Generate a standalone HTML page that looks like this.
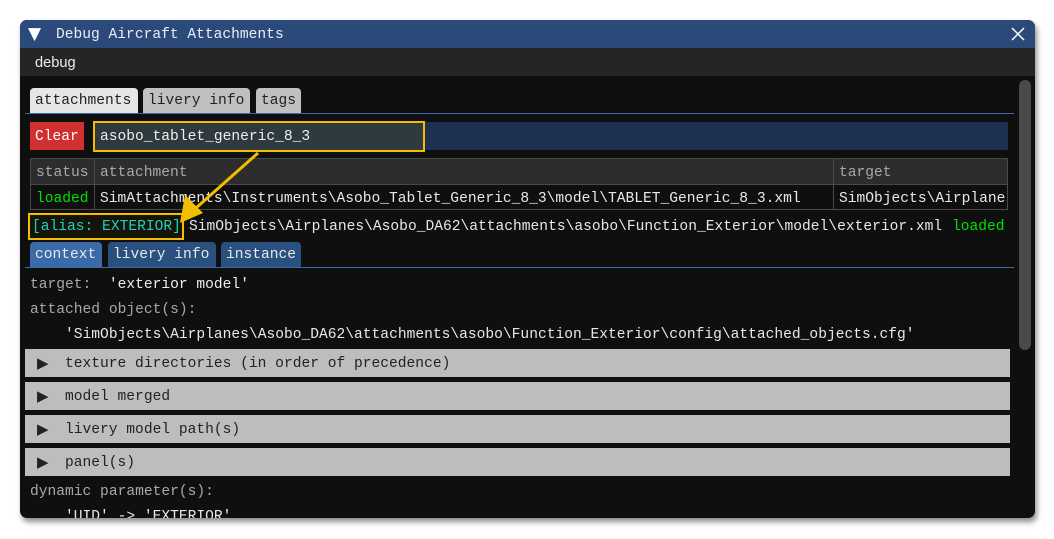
<!DOCTYPE html>
<html><head><meta charset="utf-8"><style>
*{margin:0;padding:0;box-sizing:border-box}
body{width:1054px;height:539px;background:#fff;position:relative;overflow:hidden;font-family:"Liberation Mono",monospace;font-size:14.6px;color:#e8e8e8}
.a{position:absolute;white-space:pre;line-height:28px}
#win{position:absolute;left:20px;top:20px;width:1015px;height:498px;background:#0f0f0f;border-radius:7px;overflow:hidden;box-shadow:2px 4px 6px rgba(0,0,0,.45)}
.hd{position:absolute;left:25px;width:985px;height:28px;background:#bdbdbd;color:#222}
.hd span{position:absolute;left:12px;top:0;line-height:29px;font-size:15px;font-family:"DejaVu Sans",sans-serif}
.hd b{position:absolute;left:40px;top:1px;line-height:28px;font-weight:normal;font-size:14.6px}
.t{position:absolute;height:25px;border-radius:4px 4px 0 0;padding-left:5px;line-height:27px;white-space:pre}
</style></head><body>
<div id="win"></div>
<div class="a" style="left:20px;top:20px;width:1015px;height:28px;background:#2b4a7a;border-radius:7px 7px 0 0"></div>
<div class="a" style="left:28px;top:20px;font-size:17px;color:#fff;font-family:'DejaVu Sans',sans-serif">▼</div>
<div class="a" style="left:56px;top:21px;color:#e8eef8">Debug Aircraft Attachments</div>
<svg style="position:absolute;left:1010px;top:26px" width="16" height="16"><path d="M2 2L14 14M14 2L2 14" stroke="#fff" stroke-width="1.5"/></svg>
<div class="a" style="left:20px;top:48px;width:1015px;height:28px;background:#252525"></div>
<div class="a" style="left:35px;top:49px;font-family:'Liberation Sans',sans-serif;font-size:14.6px;color:#eee">debug</div>
<div class="a" style="left:1019px;top:80px;width:12px;height:270px;background:#4a4a4a;border-radius:6px"></div>
<div class="t" style="left:30px;top:88px;width:108px;background:#e6e6e6;color:#222">attachments</div>
<div class="t" style="left:143px;top:88px;width:107px;background:#c0c0c0;color:#222">livery info</div>
<div class="t" style="left:256px;top:88px;width:45px;background:#c0c0c0;color:#222">tags</div>
<div class="a" style="left:25px;top:113px;width:989px;height:1px;background:#3a6aa8"></div>
<div class="a" style="left:30px;top:122px;width:54px;height:28px;background:#d03030;color:#fff;padding-left:5px;line-height:30px">Clear</div>
<div class="a" style="left:93px;top:122px;width:915px;height:28px;background:#1c3050"></div>
<div class="a" style="left:93px;top:121px;width:332px;height:31px;background:#2e3a3d;border:2px solid #f5bd00;color:#eee;padding-left:5px;line-height:29px">asobo_tablet_generic_8_3</div>
<div class="a" style="left:30px;top:158px;width:978px;height:27px;background:#2d2d2d;border:1px solid #4a4a4a"></div>
<div class="a" style="left:30px;top:184px;width:978px;height:26px;border:1px solid #4a4a4a"></div>
<div class="a" style="left:94px;top:158px;width:1px;height:52px;background:#4a4a4a"></div>
<div class="a" style="left:833px;top:158px;width:1px;height:52px;background:#4a4a4a"></div>
<div class="a" style="left:36px;top:159px;color:#a8a8a8">status</div>
<div class="a" style="left:100px;top:159px;color:#a8a8a8">attachment</div>
<div class="a" style="left:839px;top:159px;color:#a8a8a8">target</div>
<div class="a" style="left:36px;top:185px;color:#00e000">loaded</div>
<div class="a" style="left:100px;top:185px">SimAttachments\Instruments\Asobo_Tablet_Generic_8_3\model\TABLET_Generic_8_3.xml</div>
<div class="a" style="left:839px;top:185px;width:166px;overflow:hidden">SimObjects\Airplanes</div>
<div class="a" style="left:28px;top:213px;width:156px;height:27px;background:#141408;border:2px solid #f5bd00"></div>
<div class="a" style="left:32px;top:213px;color:#20d0c0">[alias: EXTERIOR]</div>
<div class="a" style="left:189px;top:213px">SimObjects\Airplanes\Asobo_DA62\attachments\asobo\Function_Exterior\model\exterior.xml</div>
<div class="a" style="left:952px;top:213px;color:#00e000">loaded</div>
<svg style="position:absolute;left:0;top:0" width="1054" height="539"><path d="M258 153L196 208" stroke="#f5bd00" stroke-width="3"/><path d="M180 223L185 195L203 213Z" fill="#f5bd00"/></svg>
<div class="t" style="left:30px;top:242px;width:72px;background:#3a6aa8">context</div>
<div class="t" style="left:108px;top:242px;width:108px;background:#2a5080">livery info</div>
<div class="t" style="left:221px;top:242px;width:80px;background:#2a5080">instance</div>
<div class="a" style="left:25px;top:267px;width:989px;height:1px;background:#3a6aa8"></div>
<div class="a" style="left:30px;top:271px;color:#a8a8a8">target:  <span style="color:#eee">'exterior model'</span></div>
<div class="a" style="left:30px;top:296px;color:#a8a8a8">attached object(s):</div>
<div class="a" style="left:30px;top:321px">    'SimObjects\Airplanes\Asobo_DA62\attachments\asobo\Function_Exterior\config\attached_objects.cfg'</div>
<div class="hd" style="top:349px"><span>▶</span><b>texture directories (in order of precedence)</b></div>
<div class="hd" style="top:382px"><span>▶</span><b>model merged</b></div>
<div class="hd" style="top:415px"><span>▶</span><b>livery model path(s)</b></div>
<div class="hd" style="top:448px"><span>▶</span><b>panel(s)</b></div>
<div class="a" style="left:30px;top:478px;color:#a8a8a8">dynamic parameter(s):</div>
<div style="position:absolute;left:20px;top:500px;width:1000px;height:18px;overflow:hidden"><div class="a" style="left:10px;top:3px">    'UID' -> 'EXTERIOR'</div></div>
</body></html>
